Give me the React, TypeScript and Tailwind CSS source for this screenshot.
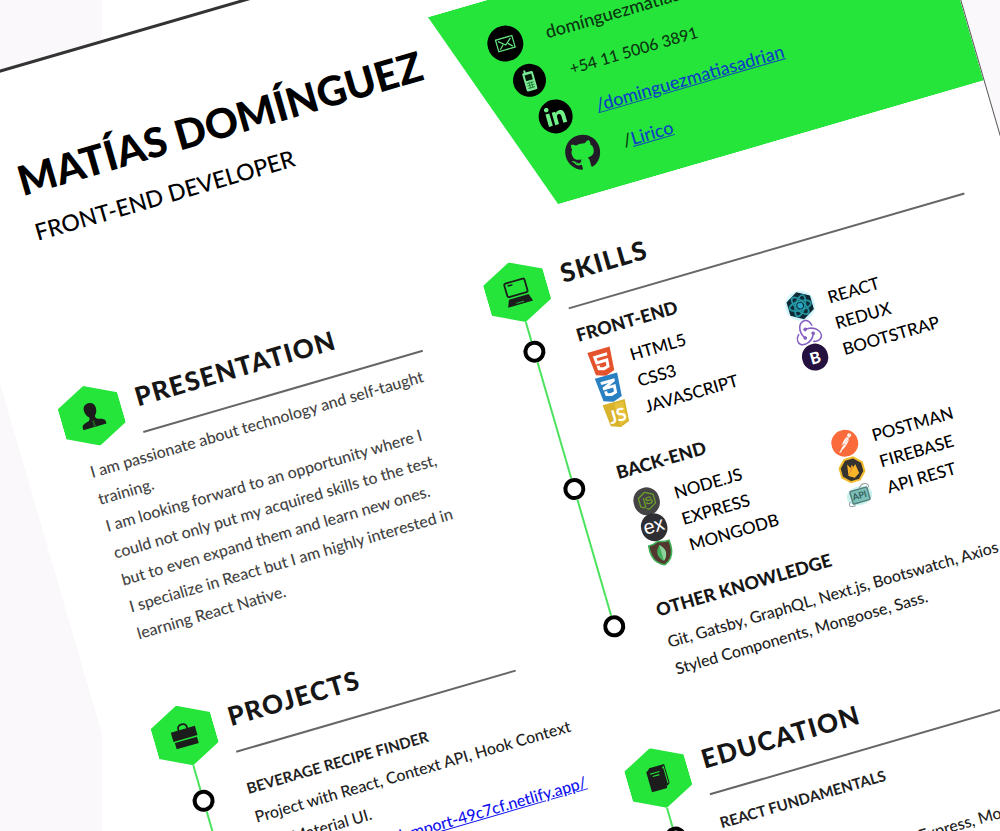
import type { ReactNode } from "react";
import { FaCss3Alt, FaGithub, FaHtml5, FaLinkedinIn, FaNodeJs } from "react-icons/fa";
import { SiPostman, SiRedux } from "react-icons/si";

const GREEN = "#25e53b";

function MailIcon() {
  return (
    <svg viewBox="0 0 36 36" className="size-9" aria-hidden="true">
      <circle cx="18" cy="18" r="18" fill="#000" />
      <g fill="none" stroke="#5fe07c" strokeWidth="1.3">
        <rect x="9.500" y="12" width="17" height="12" />
        <path d="M11.500 14l6.500 5.500 6.500-5.500M11.500 22.500l4-4M24.500 22.500l-4-4" />
      </g>
    </svg>
  );
}

function PhoneIcon() {
  return (
    <svg viewBox="0 0 34 34" className="mx-px size-[34px]" aria-hidden="true">
      <circle cx="17" cy="17" r="16.5" fill="#000" />
      <path d="M12.500 8.500h1V6H15.500v2.500H21q1.500 0 1.500 1.500v16q0 1.500-1.500 1.500h-8Q11.500 27.500 11.500 26V10q0-1.500 1-1.500z" fill="#7be995" />
      <rect x="13.500" y="11" width="7" height="6" fill="#041c08" />
      <path d="M13.500 19.500h7M13.500 22h7M13.500 24.500h7M15.800 18.500v7M18.300 18.500v7" stroke="#1d7a30" strokeWidth=".8" />
    </svg>
  );
}

function LinkedinIcon() {
  return (
    <span className="mx-px flex size-[34px] items-center justify-center rounded-full bg-black text-[#6ff088]">
      <FaLinkedinIn size={22} aria-hidden="true" />
    </span>
  );
}

function PersonIcon() {
  return (
    <svg viewBox="0 0 28 28" className="size-7" aria-hidden="true" fill="#1c1c1c">
      <path d="M14 1c4 0 6.200 2.500 6.200 6.500 0 3-1.400 6-3.200 7.300v2l1.500 1.700c4 .8 7.500 2 7.500 4.500v2.500H2V23c0-2.500 3.500-3.700 7.500-4.500L11 16.800v-2C9.200 13.500 7.800 10.500 7.800 7.500 7.800 3.500 10 1 14 1z" />
      <path d="M12.500 19h3l-.8 2 .6 4h-2.600l.6-4z" fill={GREEN} opacity=".35" />
    </svg>
  );
}

function LaptopIcon() {
  return (
    <svg viewBox="0 0 28 28" className="size-7" aria-hidden="true">
      <rect x="3.500" y="2.500" width="21" height="14" rx="1.500" fill="none" stroke="#1c1c1c" strokeWidth="1.800" />
      <path d="M6.500 5.500h5" stroke="#1c1c1c" strokeWidth="1.600" />
      <path d="M4 19h20.500l2.500 7.500H1z" fill="#1c1c1c" />
      <path d="M10 24.500h8" stroke={GREEN} strokeWidth=".7" />
    </svg>
  );
}

function BriefcaseIcon() {
  return (
    <svg viewBox="0 0 28 28" className="size-7" aria-hidden="true" fill="#1c1c1c">
      <path d="M9.500 8V6.500Q9.500 2.500 14 2.500T18.500 6.500V8" fill="none" stroke="#1c1c1c" strokeWidth="1.800" />
      <rect x="1.500" y="7.500" width="25" height="9.500" />
      <rect x="2.500" y="18.500" width="23" height="6.500" />
    </svg>
  );
}

function BookIcon() {
  return (
    <svg viewBox="0 0 28 28" className="size-7" aria-hidden="true">
      <path d="M5 5l3-3h15.500v20l-3 2z" fill="#1c1c1c" />
      <path d="M20.500 5.500l1.500-1v17" fill="none" stroke={GREEN} strokeWidth="1" />
      <rect x="4" y="4.500" width="16" height="21.500" rx="1" fill="#1c1c1c" />
      <path d="M7 8h10M9 11h7" stroke={GREEN} strokeWidth="1.100" />
    </svg>
  );
}

function ScriptLogo() {
  return (
    <span className="relative flex size-[27px] items-center justify-center">
      <svg viewBox="0 0 26 26" className="absolute inset-0 size-full" aria-hidden="true">
        <path d="M1.500 0h23l-2 22.500L13 26l-9.500-3.500z" fill="#d9b32b" />
        <path d="M13 2h9.500l-1.700 19L13 24z" fill="#e6c23c" />
      </svg>
      <span className="relative text-lg leading-none font-bold text-white">JS</span>
    </span>
  );
}

function ReactLogo() {
  return (
    <svg viewBox="0 0 30 30" className="-mx-0.5 size-[30px]" aria-hidden="true">
      <circle cx="15" cy="15" r="15" fill="#9fe9f2" opacity=".45" />
      <path d="M15 1l12.200 7v14L15 29 2.800 22V8z" fill="#0d2b36" />
      <g fill="none" stroke="#2596a3" strokeWidth="1.700">
        <ellipse cx="15" cy="15" rx="11" ry="4.600" />
        <ellipse cx="15" cy="15" rx="11" ry="4.600" transform="rotate(60 15 15)" />
        <ellipse cx="15" cy="15" rx="11" ry="4.600" transform="rotate(120 15 15)" />
      </g>
      <circle cx="15" cy="15" r="2.800" fill="#27a5c4" />
    </svg>
  );
}

function BootstrapLogo() {
  return (
    <span className="flex size-[27px] items-center justify-center rounded-full bg-[#25113f] text-base leading-none font-black text-white">
      B
    </span>
  );
}

function NodeLogo() {
  return (
    <span className="flex size-7 items-center justify-center rounded-full bg-[#444] text-[#6ea32a]">
      <FaNodeJs size={19} aria-hidden="true" />
    </span>
  );
}

function ExpressLogo() {
  return (
    <span className="flex size-7 items-center justify-center rounded-full bg-[#2f2f33] font-['Liberation_Sans',sans-serif] text-xl leading-none text-white">
      <span className="-mt-1">ex</span>
    </span>
  );
}

function MongoLogo() {
  return (
    <svg viewBox="0 0 26 26" className="size-[26px]" aria-hidden="true">
      <path d="M2.500 2.500q5 .5 10.500-2 5.500 2.500 10.500 2 1.500 11.500-3.500 17.500-3 3.500-7 5-4-1.500-7-5-5-6-3.500-17.500z" fill="#53382f" stroke="#3fae55" strokeWidth="1.600" />
      <path d="M13 4.500c3.500 4 5 6.500 4 10.500-.7 2.500-2 4.500-4 6-2-1.500-3.300-3.500-4-6-1-4 .5-6.500 4-10.500z" fill="#43b05c" />
      <path d="M13 4.500c3.500 4 5 6.500 4 10.500-.7 2.500-2 4.500-4 6z" fill="#8fd39c" />
    </svg>
  );
}

function FirebaseLogo() {
  return (
    <svg viewBox="0 0 28 28" className="size-7" aria-hidden="true">
      <path
        d="M9 1.500h10L26.500 9v10L19 26.500H9L1.500 19V9z"
        fill="#35322f"
        stroke="#f2bb2c"
        strokeWidth="2.200"
        strokeLinejoin="round"
      />
      <path d="M8.500 19.500l2-12.500 3 5 1.500-3 1.500 2.500 2.500-2.500 1.500 10.500-6 3.500z" fill="#f9b52a" />
      <path d="M8.500 19.500l6.500-10.500 1.200 2.700z" fill="#e8912a" />
    </svg>
  );
}

function ApiLogo() {
  return (
    <span className="relative flex h-6 w-7 items-center justify-center">
      <svg viewBox="0 0 28 24" className="absolute inset-0 size-full" aria-hidden="true">
        <ellipse cx="14" cy="12" rx="14" ry="10" fill="#c9f1ee" />
        <path d="M16 4q3-4 7-3 4 1 3 5M3 16q-3 1-2 4 3 2 6 1" fill="none" stroke="#9aa5a5" strokeWidth="1.200" />
        <rect x="5" y="5" width="19" height="14" rx="1" fill="#7cc0b8" stroke="#54807d" strokeWidth="1.600" />
      </svg>
      <span className="relative text-[9px] leading-none font-bold text-[#35615f]">API</span>
    </span>
  );
}

function PostmanLogo() {
  return (
    <span className="flex size-[27px] items-center justify-center rounded-full bg-white text-[#fb6a3a]">
      <SiPostman size={27} aria-hidden="true" />
    </span>
  );
}

const contacts = [
  { icon: <MailIcon />, style: "pl-[49px] text-lg", text: "domínguezmatiasadrian@gmail.com" },
  { icon: <PhoneIcon />, style: "pl-[62px] text-base", text: "+54 11 5006 3891" },
  {
    icon: <LinkedinIcon />,
    style: "pl-[77px] text-lg",
    text: (
      <a href="#linkedin" className="text-[#0b3ec4] underline">
        /dominguezmatiasadrian
      </a>
    ),
  },
  {
    icon: <FaGithub className="size-9 text-[#231b28]" aria-hidden="true" />,
    style: "pl-[93px] text-lg",
    text: (
      <>
        /
        <a href="#github" className="text-[#0b3ec4] underline">
          Lirico
        </a>
      </>
    ),
  },
];

type Skill = { name: string; icon: ReactNode };

const frontEnd: Skill[][] = [
  [
    { name: "HTML5", icon: <FaHtml5 size={31} color="#e5532d" aria-hidden="true" /> },
    { name: "CSS3", icon: <FaCss3Alt size={31} color="#2a80c0" aria-hidden="true" /> },
    { name: "JAVASCRIPT", icon: <ScriptLogo /> },
  ],
  [
    { name: "REACT", icon: <ReactLogo /> },
    { name: "REDUX", icon: <SiRedux size={26} color="#8560c0" aria-hidden="true" /> },
    { name: "BOOTSTRAP", icon: <BootstrapLogo /> },
  ],
];

const backEnd: Skill[][] = [
  [
    { name: "NODE.JS", icon: <NodeLogo /> },
    { name: "EXPRESS", icon: <ExpressLogo /> },
    { name: "MONGODB", icon: <MongoLogo /> },
  ],
  [
    { name: "POSTMAN", icon: <PostmanLogo /> },
    { name: "FIREBASE", icon: <FirebaseLogo /> },
    { name: "API REST", icon: <ApiLogo /> },
  ],
];

function Section({ icon, title, children }: { icon: ReactNode; title: string; children: ReactNode }) {
  return (
    <section>
      <div className="flex items-start">
        <div className="flex h-[62px] w-[62px] shrink-0 items-center justify-center bg-[#25e53b] [clip-path:polygon(50%_0,100%_25%,100%_75%,50%_100%,0_75%,0_25%)]">
          {icon}
        </div>
        <div className="ml-3.5 h-[62px] flex-1 border-b-2 border-[#666] pt-2.5">
          <h2 className="pl-0.5 text-[26px] leading-[30px] font-black tracking-wider text-[#161616]">{title}</h2>
        </div>
      </div>
      {children}
    </section>
  );
}

function Entry({ lead = "h-5", last = false, children }: { lead?: string; last?: boolean; children: ReactNode }) {
  return (
    <div className="flex">
      <div className="flex w-[62px] shrink-0 flex-col items-center">
        <div className={`w-0.5 bg-[#4be35d] ${lead}`} />
        <div className="size-[22px] rounded-full border-4 border-black bg-white" />
        {!last && <div className="w-0.5 flex-1 bg-[#4be35d]" />}
      </div>
      <div className="min-w-0 flex-1 pt-[15px] pl-3.5">{children}</div>
    </div>
  );
}

function SkillGroup({ title, columns, indent }: { title: string; columns: Skill[][]; indent: string }) {
  return (
    <div className="h-32">
      <h3 className="text-lg leading-6 font-black text-[#161616]">{title}</h3>
      <div className={`grid grid-cols-[206px_1fr] ${indent}`}>
        {columns.map((column, index) => (
          <ul key={index}>
            {column.map((skill) => (
              <li key={skill.name} className="flex h-[27px] items-center gap-4 text-[17px] leading-[27px] font-medium text-black">
                <span className="flex w-[26px] shrink-0 justify-center">{skill.icon}</span>
                {skill.name}
              </li>
            ))}
          </ul>
        ))}
      </div>
    </div>
  );
}

export default function App() {
  return (
    <div className="h-screen overflow-hidden bg-[linear-gradient(90deg,#faf8fa_0_102px,#fff_102px_calc(100%-102px),#faf8fa_calc(100%-102px))] font-['Lato','Open_Sans',sans-serif]">
      <main className="mt-[94px] -ml-[84px] w-[103%] origin-top-left -rotate-[16.2deg] border-t-[3px] border-r border-t-[#333] border-r-[#555] bg-white pb-96">
        <header className="flex items-start whitespace-nowrap">
          <div className="w-[513px] shrink-0 pt-[88px] pl-[74px]">
            <h1 className="text-[41px] leading-[44px] font-black text-black">MATÍAS DOMÍNGUEZ</h1>
            <p className="mt-[15px] pl-0.5 text-[23px] leading-8 font-medium text-black">FRONT-END DEVELOPER</p>
          </div>
          <address className="mt-[66px] h-[216px] flex-1 bg-[#25e53b] pt-[26px] not-italic [clip-path:polygon(0_0,100%_0,100%_100%,73px_100%)]">
            <ul>
              {contacts.map((contact) => (
                <li key={contact.style} className={`flex h-[42px] items-center gap-6 leading-6 font-medium text-[#0a3510] ${contact.style}`}>
                  <span className="shrink-0">{contact.icon}</span>
                  <span>{contact.text}</span>
                </li>
              ))}
            </ul>
          </address>
        </header>

        <div className="flex pt-[42px] pr-[50px] pl-12 whitespace-nowrap">
          <div className="flex w-[367px] shrink-0 flex-col gap-[66px]">
            <Section icon={<PersonIcon />} title="PRESENTATION">
              <div className="mt-[9px] pl-3.5 text-base leading-7 font-medium text-[#444]">
                <p>
                  I am passionate about technology and self-taught
                  <br />
                  training.
                </p>
                <p>
                  I am looking forward to an opportunity where I
                  <br />
                  could not only put my acquired skills to the test,
                  <br />
                  but to even expand them and learn new ones.
                </p>
                <p>
                  I specialize in React but I am highly interested in
                  <br />
                  learning React Native.
                </p>
              </div>
            </Section>
            <Section icon={<BriefcaseIcon />} title="PROJECTS">
              <Entry lead="h-[26px]">
                <div className="pt-2 pb-12 text-base leading-[29px] font-medium text-[#222]">
                  <h3 className="text-[15px] font-bold">BEVERAGE RECIPE FINDER</h3>
                  <p>
                    Project with React, Context API, Hook Context
                    <br />
                    and Material UI.
                  </p>
                  <a href="#project" className="text-[#1010ee] underline">
                    https://mysterious-lamport-49c7cf.netlify.app/
                  </a>
                </div>
              </Entry>
            </Section>
          </div>

          <div className="ml-[76px] flex min-w-0 flex-1 flex-col gap-[55px]">
            <Section icon={<LaptopIcon />} title="SKILLS">
              <Entry>
                <SkillGroup title="FRONT-END" columns={frontEnd} indent="pt-2 pl-1" />
              </Entry>
              <Entry>
                <SkillGroup title="BACK-END" columns={backEnd} indent="pt-2.5 pl-2" />
              </Entry>
              <Entry last>
                <h3 className="text-lg leading-6 font-black text-[#161616]">OTHER KNOWLEDGE</h3>
                <p className="mt-2 pl-0.5 text-base leading-7 font-medium text-[#222]">
                  Git, Gatsby, GraphQL, Next.js, Bootswatch, Axios
                  <br />
                  Styled Components, Mongoose, Sass.
                </p>
              </Entry>
            </Section>
            <Section icon={<BookIcon />} title="EDUCATION">
              <Entry>
                <div className="pb-12 pl-0.5 text-base leading-7 font-medium text-[#222]">
                  <h3 className="text-[15px] font-bold">REACT FUNDAMENTALS</h3>
                  <p className="mt-10">JavaScript, React, Node.js, Express, Mongo</p>
                </div>
              </Entry>
            </Section>
          </div>
        </div>
      </main>
    </div>
  );
}
